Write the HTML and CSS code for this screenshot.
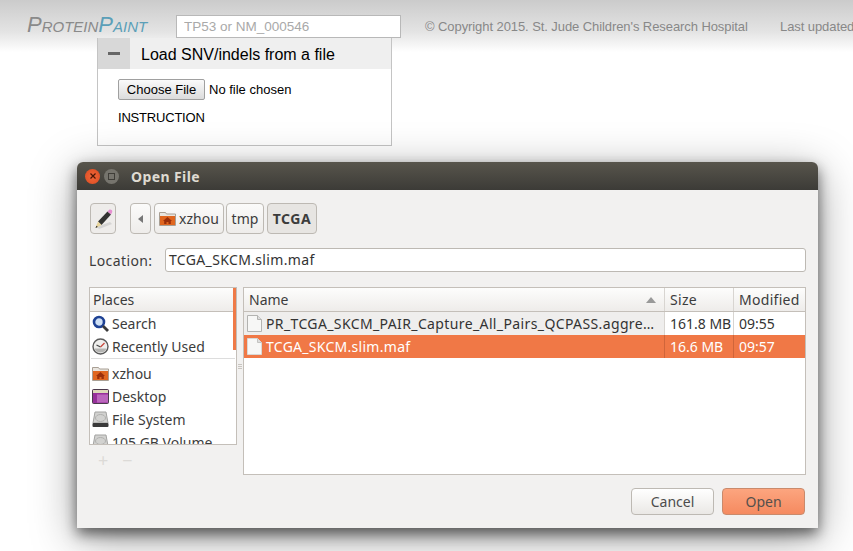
FILE: index.html
```html
<!DOCTYPE html>
<html>

<head>
  <meta name="viewport" content="width=device-width, initial-scale=1.0" />
  <title>ProteinPaint</title>
  <link rel="stylesheet" href="styles.css">
</head>

<body>
  <div class="banner">
    <div class="logo"><span class="logoGray">Protein</span><span class="logoBlue">Paint</span></div>
    <input class="geneSearch" type="text" placeholder="TP53 or NM_000546">
    <div class="copyright">&copy; Copyright 2015. St. Jude Children's Research Hospital</div>
    <div class="updated">Last updated</div>
  </div>

  <div class="loadPanel">
    <div class="loadHead">
      <div class="loadToggle"><span class="minus"></span></div>
      <div class="loadTitle">Load SNV/indels from a file</div>
    </div>
    <div class="loadBody">
      <div class="fileRow"><span class="chooseBtn">Choose File</span><span>No file chosen</span></div>
      <div class="instruction">INSTRUCTION</div>
    </div>
  </div>

  <div class="dialog">
    <div class="titlebar">
      <span class="winBtn closeBtn">
        <svg width="8" height="8" viewBox="0 0 8 8"><path d="M1.500 1.500l5 5M6.500 1.500l-5 5" stroke="#4a1606" stroke-width="1.200"/></svg>
      </span>
      <span class="winBtn maxBtn"><span class="maxSquare"></span></span>
      <span class="winTitle">Open File</span>
    </div>

    <div class="dialogBody">
      <div class="pathRow">
        <span class="pathBtn editBtn">
          <svg width="22" height="24" viewBox="0 0 22 24">
            <path d="M5 20l13-5 2 2-13 5z" fill="#bbb" opacity=".5"/>
            <path d="M6 14.500L15.500 4.500l3.500 3L9.500 18z" fill="#333331"/>
            <path d="M15.500 4.500l1.500-1.500c.8-.7 1.800-.6 2.600.1s.9 1.800.3 2.600L19 7.500z" fill="#e58fd0"/>
            <path d="M6 14.500l3.500 3.500L3.500 21z" fill="#e8d49a"/>
            <path d="M4.500 18.800l1.300 1.300L3.500 21z" fill="#222"/>
          </svg>
        </span>
        <span class="pathBtn backBtn"><span class="backArrow"></span></span>
        <span class="pathBtn xzhouBtn">
          <svg width="17" height="15" viewBox="0 0 17 15">
            <path d="M.5 1.500h6l1 1.500h9v11.500H.5z" fill="#e9e5df" stroke="#a89f94"/>
            <path d="M1 5h15v9H1z" fill="#e0661f"/>
            <path d="M8.500 6L4 10h1.200v3h2.300v-2h2v2h2.300v-3H13z" fill="#9a2f0a"/>
          </svg>xzhou</span>
        <span class="pathBtn tmpBtn">tmp</span>
        <span class="pathBtn tcgaBtn">TCGA</span>
      </div>

      <div class="locationRow">
        <label class="locationLabel">Location:</label>
        <div class="locationInput">TCGA_SKCM.slim.maf</div>
      </div>

      <div class="browser">
        <div class="placesCol">
          <div class="places">
            <div class="placesHead">Places</div>
            <div class="placesScroll"></div>
            <div class="placeRow">
              <svg width="17" height="17" viewBox="0 0 17 17"><circle cx="7" cy="7" r="5" fill="#cfe0f5" stroke="#1f4294" stroke-width="2.600"/><path d="M11 11l5 5" stroke="#3a3a3a" stroke-width="2.800"/></svg>
              <span>Search</span>
            </div>
            <div class="placeRow">
              <svg width="17" height="17" viewBox="0 0 17 17"><circle cx="8.500" cy="8.500" r="7.500" fill="#efefed" stroke="#5a5a5a" stroke-width="1.400"/><path d="M2.500 10.500a6.500 6.500 0 0 0 12 0z" fill="#b4b4b2"/><path d="M8.500 9L4.500 7" stroke="#444" stroke-width="1.200"/><path d="M8.500 9l4-4" stroke="#c8453a" stroke-width="1.200"/></svg>
              <span>Recently Used</span>
            </div>
            <div class="placeSep"></div>
            <div class="placeRow">
              <svg width="17" height="15" viewBox="0 0 17 15"><path d="M.5 1.500h6l1 1.500h9v11.500H.5z" fill="#e9e5df" stroke="#a89f94"/><path d="M1 5h15v9H1z" fill="#e0661f"/><path d="M8.500 6L4 10h1.200v3h2.300v-2h2v2h2.300v-3H13z" fill="#9a2f0a"/></svg>
              <span>xzhou</span>
            </div>
            <div class="placeRow">
              <svg width="17" height="15" viewBox="0 0 17 15"><rect x=".5" y=".5" width="16" height="14" rx="1" fill="#96309a" stroke="#4b3a4b"/><rect x="1" y="1" width="15" height="3" fill="#dcd9b8"/><rect x="5" y="5.500" width="11" height="8" fill="#bb66bd"/></svg>
              <span>Desktop</span>
            </div>
            <div class="placeRow">
              <svg width="17" height="17" viewBox="0 0 17 17"><path d="M3 1h11l2 11H1z" fill="#d2d2d0" stroke="#a3a3a1"/><ellipse cx="8.500" cy="7" rx="5" ry="3.500" fill="none" stroke="#b0b0ae"/><rect x=".5" y="12" width="16" height="4" rx="1" fill="#3a3a3a"/></svg>
              <span>File System</span>
            </div>
            <div class="placeRow">
              <svg width="17" height="17" viewBox="0 0 17 17"><path d="M3 1h11l2 11H1z" fill="#d2d2d0" stroke="#a3a3a1"/><ellipse cx="8.500" cy="7" rx="5" ry="3.500" fill="none" stroke="#b0b0ae"/><rect x=".5" y="12" width="16" height="4" rx="1" fill="#3a3a3a"/></svg>
              <span>105 GB Volume</span>
            </div>
          </div>
          <div class="placeTools"><span>+</span><span>&minus;</span></div>
        </div>

        <div class="grip"><span></span><span></span><span></span></div>

        <div class="files">
          <div class="fileHead">
            <div class="colName headName">Name<span class="sortArrow"></span></div>
            <div class="colSize">Size</div>
            <div class="colMod">Modified</div>
          </div>
          <div class="fileRowItem">
            <div class="colName cellName">
              <svg width="15" height="17" viewBox="0 0 15 17"><path d="M.5.500h10l4 4v12H.5z" fill="#f7f7f6" stroke="#b3b3b1"/><path d="M10.500.500v4h4" fill="#ddd" stroke="#b3b3b1"/></svg>
              <span class="fileName longName">PR_TCGA_SKCM_PAIR_Capture_All_Pairs_QCPASS.aggre&hellip;</span>
            </div>
            <div class="colSize">161.8 MB</div>
            <div class="colMod">09:55</div>
          </div>
          <div class="fileRowItem selected">
            <div class="colName">
              <svg width="15" height="17" viewBox="0 0 15 17"><path d="M.5.500h10l4 4v12H.5z" fill="#f7f7f6" stroke="#d8d8d6"/><path d="M10.500.500v4h4" fill="#ddd" stroke="#c3c3c1"/></svg>
              <span class="fileName">TCGA_SKCM.slim.maf</span>
            </div>
            <div class="colSize">16.6 MB</div>
            <div class="colMod">09:57</div>
          </div>
        </div>
      </div>

      <div class="actions">
        <span class="actionBtn cancelBtn">Cancel</span>
        <span class="actionBtn openBtn">Open</span>
      </div>
    </div>
  </div>
</body>

</html>
```

FILE: styles.css
```css
html, body {
  margin: 0;
  height: 551px;
  overflow: hidden;
}

body {
  position: relative;
  background: #fff linear-gradient(#cbcbcb, #e4e4e4 32px, #ffffff 52px) no-repeat;
  background-size: 100% 52px;
  font-family: "Liberation Sans", Arial, sans-serif;
  color: #000;
}

/* page behind the dialog */

.banner {
  display: flex;
  align-items: flex-start;
  height: 38px;
  padding: 15px 0 0 27px;
  box-sizing: border-box;
  white-space: nowrap;
  overflow: hidden;
}

.logo {
  flex: none;
  width: 149px;
  font-size: 22px;
  line-height: 20px;
  font-style: italic;
  font-variant: small-caps;
}

.logoGray {
  color: #8a8a8a;
}

.logoBlue {
  color: #5b9fb8;
}

.geneSearch {
  flex: none;
  width: 225px;
  height: 23px;
  box-sizing: border-box;
  margin: 0;
  padding: 0 7px;
  border: 1px solid #b8b8b8;
  font: 13.500px "Liberation Sans", sans-serif;
  outline: none;
}

.geneSearch::placeholder {
  color: #a9a9a9;
}

.copyright {
  flex: none;
  margin-left: 24px;
  width: 355px;
  font-size: 13px;
  letter-spacing: -.08px;
  line-height: 24px;
  color: #888;
}

.updated {
  font-size: 13px;
  letter-spacing: -.08px;
  line-height: 24px;
  color: #888;
}

.loadPanel {
  width: 295px;
  height: 108px;
  box-sizing: border-box;
  margin-left: 97px;
  border: 1px solid #c4c4c4;
  border-top: none;
  background: #fff;
}

.loadHead {
  display: flex;
  height: 31px;
  background: #efefef;
}

.loadToggle {
  display: flex;
  align-items: center;
  justify-content: center;
  width: 32px;
  background: #d8d8d8;
}

.minus {
  width: 12px;
  height: 3px;
  background: #666;
}

.loadTitle {
  padding-left: 11px;
  font-size: 16px;
  line-height: 33px;
}

.loadBody {
  padding: 10px 20px;
  font-size: 13px;
}

.fileRow {
  display: flex;
  align-items: center;
  gap: 4px;
}

.chooseBtn {
  width: 87px;
  height: 21px;
  box-sizing: border-box;
  border: 1px solid #a0a0a0;
  border-radius: 2px;
  background: linear-gradient(#fafafa, #dcdcdc);
  text-align: center;
  line-height: 19px;
}

.instruction {
  margin-top: 10px;
  letter-spacing: -.2px;
}

/* the file dialog lies over the page */

.dialog {
  position: absolute;
  left: 77px;
  top: 162px;
  width: 741px;
  height: 366px;
  border-radius: 6px 6px 0 0;
  background: #f2f1f0;
  box-shadow: 0 6px 14px rgba(0, 0, 0, .55), 0 10px 46px rgba(0, 0, 0, .38);
  font-family: "Noto Sans", sans-serif;
  font-size: 14px;
  color: #3c3c3c;
}

.titlebar {
  display: flex;
  align-items: center;
  height: 28px;
  padding-left: 8px;
  box-sizing: border-box;
  border-radius: 6px 6px 0 0;
  background: linear-gradient(#58554c, #3c3b37);
}

.winBtn {
  display: flex;
  align-items: center;
  justify-content: center;
  width: 15px;
  height: 15px;
  border-radius: 50%;
  margin-right: 4px;
}

.closeBtn {
  background: radial-gradient(#f0683a, #dd4a20);
}

.maxBtn {
  background: #76746d;
}

.maxSquare {
  width: 5px;
  height: 5px;
  border: 1px solid #3f3d38;
}

.winTitle {
  margin-left: 8px;
  font-size: 14px;
  letter-spacing: .4px;
  font-weight: bold;
  color: #dfdbd2;
}

.dialogBody {
  padding: 13px 12px 0 12px;
}

.pathRow {
  display: flex;
  height: 31px;
}

.pathBtn {
  display: flex;
  align-items: center;
  justify-content: center;
  box-sizing: border-box;
  height: 31px;
  border: 1px solid #bdb9b3;
  border-radius: 4px;
  background: linear-gradient(#fbfbfa, #eeecea);
}

.editBtn {
  width: 26px;
  margin-left: 1px;
  background: #eeecea;
}

.backBtn {
  width: 21px;
  margin-left: 14px;
}

.backArrow {
  width: 0;
  height: 0;
  border: 4px solid transparent;
  border-left: none;
  border-right: 5px solid #777;
}

.xzhouBtn {
  width: 70px;
  margin-left: 3px;
  gap: 3px;
}

.tmpBtn {
  width: 38px;
  margin-left: 2px;
}

.tcgaBtn {
  width: 50px;
  margin-left: 3px;
  font-weight: bold;
  letter-spacing: .6px;
  background: #e7e5e2;
}

.locationRow {
  display: flex;
  align-items: center;
  margin-top: 14px;
}

.locationLabel {
  width: 76px;
  letter-spacing: .4px;
}

.locationInput {
  flex: 1;
  height: 24px;
  box-sizing: border-box;
  padding-left: 3px;
  border: 1px solid #bdb9b3;
  border-radius: 3px;
  background: #fff;
  line-height: 21px;
  letter-spacing: .35px;
  color: #333;
}

.browser {
  display: flex;
  margin-top: 15px;
}

.placesCol {
  width: 148px;
}

.places {
  position: relative;
  height: 158px;
  box-sizing: border-box;
  border: 1px solid #c4bfb9;
  background: #fff;
  overflow: hidden;
}

.placesHead {
  height: 24px;
  box-sizing: border-box;
  padding-left: 3px;
  border-bottom: 1px solid #c4bfb9;
  background: linear-gradient(#fdfdfc, #eeecea);
  line-height: 23px;
}

.placesScroll {
  position: absolute;
  top: 0;
  right: 0;
  width: 3px;
  height: 62px;
  background: #ef7a47;
}

.placeRow {
  display: flex;
  align-items: center;
  gap: 3px;
  height: 23px;
  padding-left: 2px;
}

.placeSep {
  height: 1px;
  margin: 0 1px 3px;
  background: #ddd;
}

.placeTools {
  display: flex;
  gap: 14px;
  padding-left: 9px;
  font-size: 18px;
  line-height: 30px;
  color: #dcdad7;
}

.grip {
  display: flex;
  flex-direction: column;
  justify-content: center;
  gap: 1px;
  width: 6px;
  height: 158px;
  align-items: center;
}

.grip span {
  width: 4px;
  height: 1px;
  background: #c9c5c0;
}

.files {
  width: 563px;
  height: 188px;
  box-sizing: border-box;
  border: 1px solid #c4bfb9;
  background: #fff;
}

.fileHead {
  display: flex;
  height: 24px;
  box-sizing: border-box;
  border-bottom: 1px solid #c4bfb9;
  background: linear-gradient(#fdfdfc, #eeecea);
  line-height: 23px;
}

.colName {
  display: flex;
  align-items: center;
  gap: 4px;
  width: 421px;
  box-sizing: border-box;
  padding-left: 3px;
  border-right: 1px solid #d8d5d1;
}

.colSize {
  width: 69px;
  box-sizing: border-box;
  padding-left: 5px;
  border-right: 1px solid #d8d5d1;
}

.colMod {
  padding-left: 5px;
}

.fileHead .colSize, .fileHead .colMod {
  letter-spacing: .3px;
}

.headName {
  position: relative;
  padding-left: 5px;
}

.sortArrow {
  position: absolute;
  right: 8px;
  top: 9px;
  width: 0;
  height: 0;
  border: 5px solid transparent;
  border-top: none;
  border-bottom: 6px solid #999;
}

.fileRowItem {
  display: flex;
  height: 23px;
  line-height: 23px;
  color: #333;
}

.cellName {
  background: #efeeed;
}

.fileName {
  white-space: nowrap;
  letter-spacing: .28px;
}

.longName {
  letter-spacing: .38px;
}

.selected {
  background: #f07846;
  color: #fff;
}

.selected .colName, .selected .colSize {
  border-right-color: #d0653a;
}

.actions {
  display: flex;
  justify-content: flex-end;
  gap: 8px;
  margin-top: 13px;
  padding-right: 1px;
}

.actionBtn {
  width: 83px;
  height: 27px;
  box-sizing: border-box;
  border-radius: 4px;
  text-align: center;
  line-height: 26px;
}

.cancelBtn {
  border: 1px solid #bdb9b3;
  background: linear-gradient(#ffffff, #eae8e5);
  color: #4c4c4c;
}

.openBtn {
  border: 1px solid #c98a6c;
  background: linear-gradient(#fca57f, #f58a60);
  color: #55504c;
}
```
